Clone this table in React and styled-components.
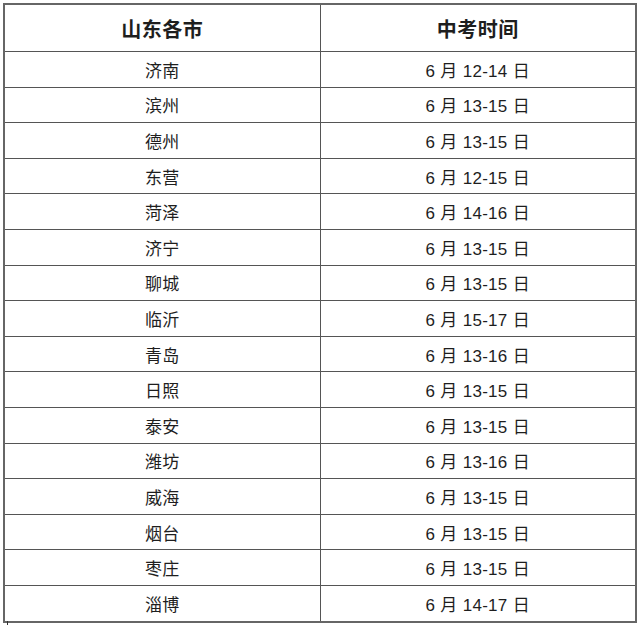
import React from "react";
import styled, { createGlobalStyle } from "styled-components";

const GlobalStyle = createGlobalStyle`
  body {
    margin: 0;
    background: #fff;
    font-family: "Liberation Sans", "Noto Sans CJK SC", sans-serif;
  }
`;

const Page = styled.div`
  width: 640px;
  height: 625px;
  padding: 3px 3px 0 3px;
  box-sizing: border-box;
  background: #fff;
  position: relative;
`;

const Table = styled.table`
  width: 634px;
  border-collapse: collapse;
  table-layout: fixed;
  border: 2px solid #666;
  color: #1e1e1e;
`;

const HeadCell = styled.th`
  height: 46px;
  border: 1.5px solid #555;
  font-size: 20px;
  font-weight: 700;
  text-align: center;
  vertical-align: middle;
  padding: 0;
  letter-spacing: 0.5px;
`;

const Cell = styled.td`
  height: 34.6px;
  border: 1.5px solid #555;
  font-size: 17px;
  text-align: center;
  vertical-align: middle;
  padding: 0;
  letter-spacing: 0.3px;
`;

const Tick = styled.div`
  position: absolute;
  left: 7px;
  top: 621px;
  width: 1px;
  height: 4px;
  background: #333;
`;

const rows = [
  ["济南", "12-14"],
  ["滨州", "13-15"],
  ["德州", "13-15"],
  ["东营", "12-15"],
  ["菏泽", "14-16"],
  ["济宁", "13-15"],
  ["聊城", "13-15"],
  ["临沂", "15-17"],
  ["青岛", "13-16"],
  ["日照", "13-15"],
  ["泰安", "13-15"],
  ["潍坊", "13-16"],
  ["威海", "13-15"],
  ["烟台", "13-15"],
  ["枣庄", "13-15"],
  ["淄博", "14-17"],
];

export default function App() {
  return (
    <Page>
      <GlobalStyle />
      <Table>
        <thead>
          <tr>
            <HeadCell>山东各市</HeadCell>
            <HeadCell>中考时间</HeadCell>
          </tr>
        </thead>
        <tbody>
          {rows.map(([city, days]) => (
            <tr key={city}>
              <Cell>{city}</Cell>
              <Cell>6 月 {days} 日</Cell>
            </tr>
          ))}
        </tbody>
      </Table>
      <Tick />
    </Page>
  );
}
